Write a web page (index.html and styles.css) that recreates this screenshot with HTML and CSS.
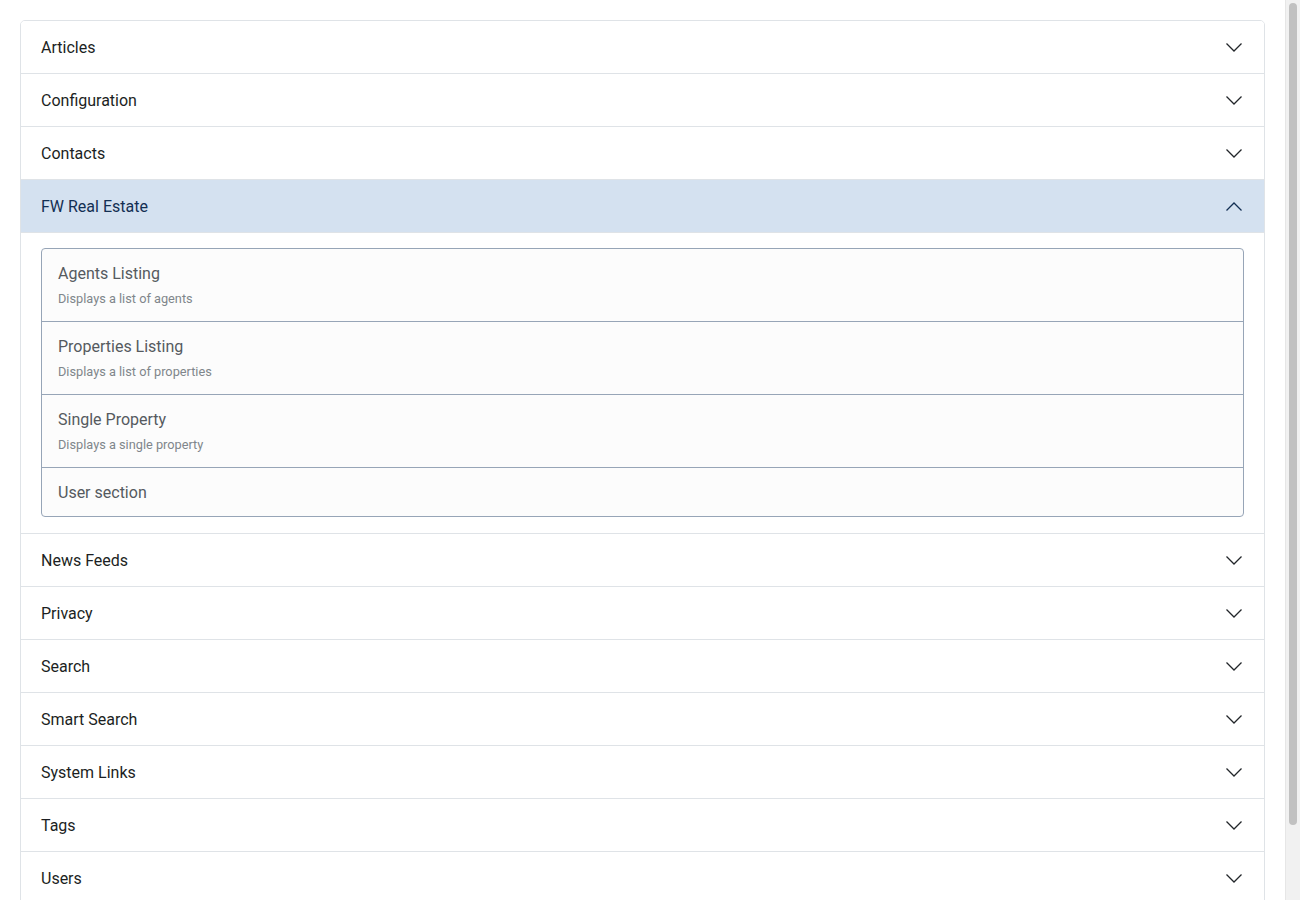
FILE: index.html
```html
<!DOCTYPE html>
<html lang="en">
<head>
<meta charset="utf-8">
<title>Menu Item Types</title>
<link rel="stylesheet" href="styles.css">
</head>
<body>
<div class="page">
  <div class="accordion">
    <div class="acc-item">
      <div class="acc-header"><span>Articles</span><svg class="chev" viewBox="0 0 16 9"><polyline points="0.5,0.5 8,8 15.5,0.5"/></svg></div>
    </div>
    <div class="acc-item">
      <div class="acc-header"><span>Configuration</span><svg class="chev" viewBox="0 0 16 9"><polyline points="0.5,0.5 8,8 15.5,0.5"/></svg></div>
    </div>
    <div class="acc-item">
      <div class="acc-header"><span>Contacts</span><svg class="chev" viewBox="0 0 16 9"><polyline points="0.5,0.5 8,8 15.5,0.5"/></svg></div>
    </div>
    <div class="acc-item open">
      <div class="acc-header active"><span>FW Real Estate</span><svg class="chev" viewBox="0 0 16 9"><polyline points="0.5,8.5 8,1 15.5,8.5"/></svg></div>
      <div class="acc-body">
        <div class="list">
          <div class="list-item">
            <div class="li-title">Agents Listing</div>
            <div class="li-desc">Displays a list of agents</div>
          </div>
          <div class="list-item">
            <div class="li-title">Properties Listing</div>
            <div class="li-desc">Displays a list of properties</div>
          </div>
          <div class="list-item">
            <div class="li-title">Single Property</div>
            <div class="li-desc">Displays a single property</div>
          </div>
          <div class="list-item">
            <div class="li-title">User section</div>
          </div>
        </div>
      </div>
    </div>
    <div class="acc-item">
      <div class="acc-header"><span>News Feeds</span><svg class="chev" viewBox="0 0 16 9"><polyline points="0.5,0.5 8,8 15.5,0.5"/></svg></div>
    </div>
    <div class="acc-item">
      <div class="acc-header"><span>Privacy</span><svg class="chev" viewBox="0 0 16 9"><polyline points="0.5,0.5 8,8 15.5,0.5"/></svg></div>
    </div>
    <div class="acc-item">
      <div class="acc-header"><span>Search</span><svg class="chev" viewBox="0 0 16 9"><polyline points="0.5,0.5 8,8 15.5,0.5"/></svg></div>
    </div>
    <div class="acc-item">
      <div class="acc-header"><span>Smart Search</span><svg class="chev" viewBox="0 0 16 9"><polyline points="0.5,0.5 8,8 15.5,0.5"/></svg></div>
    </div>
    <div class="acc-item">
      <div class="acc-header"><span>System Links</span><svg class="chev" viewBox="0 0 16 9"><polyline points="0.5,0.5 8,8 15.5,0.5"/></svg></div>
    </div>
    <div class="acc-item">
      <div class="acc-header"><span>Tags</span><svg class="chev" viewBox="0 0 16 9"><polyline points="0.5,0.5 8,8 15.5,0.5"/></svg></div>
    </div>
    <div class="acc-item">
      <div class="acc-header"><span>Users</span><svg class="chev" viewBox="0 0 16 9"><polyline points="0.5,0.5 8,8 15.5,0.5"/></svg></div>
    </div>
    <div class="acc-item">
      <div class="acc-header"><span>Wrapper</span><svg class="chev" viewBox="0 0 16 9"><polyline points="0.5,0.5 8,8 15.5,0.5"/></svg></div>
    </div>
  </div>
</div>
<div class="scrollbar" aria-hidden="true"><div class="scroll-thumb"></div></div>
</body>
</html>
```

FILE: styles.css
```css
html, body {
  margin: 0;
  padding: 0;
  background: #ffffff;
}
body {
  font-family: Roboto, "Liberation Sans", Arial, sans-serif;
  color: #22262a;
}
.page {
  padding: 20px 35px 20px 20px;
}
.scrollbar {
  position: fixed;
  top: 0;
  right: 0;
  bottom: 0;
  width: 14px;
  background: #f1f1f1;
  border-left: 1px solid #e6e6e6;
  display: flex;
  justify-content: center;
  padding-top: 3px;
  box-sizing: content-box;
}
.scroll-thumb {
  width: 8px;
  height: 822px;
  border-radius: 4px;
  background: #c1c1c1;
}
.accordion {
  border: 1px solid #dfe3e7;
  border-radius: 5px;
  overflow: hidden;
}
.acc-item + .acc-item {
  border-top: 1px solid #dfe3e7;
}
.acc-header {
  display: flex;
  align-items: center;
  justify-content: space-between;
  height: 52px;
  padding: 0 22px 0 20px;
  font-size: 16px;
  color: #1c1f23;
  background: #ffffff;
}
.acc-header.active {
  background: #d4e1f0;
  color: #132f53;
}
.chev {
  width: 16px;
  height: 9px;
  fill: none;
  stroke: #22262a;
  stroke-width: 1.25;
}
.acc-header.active .chev {
  stroke: #132f53;
}
.acc-body {
  padding: 15px 20px 16px;
  border-top: 1px solid #dfe3e7;
}
.list {
  border: 1px solid #97a5b7;
  border-radius: 4px;
  background: #fcfcfc;
}
.list-item {
  padding: 13px 16px 12px;
}
.list-item:last-child {
  padding-bottom: 11px;
}
.list-item + .list-item {
  border-top: 1px solid #97a5b7;
}
.li-title {
  font-size: 16px;
  line-height: 24px;
  color: #555a5f;
}
.li-desc {
  margin-top: 3px;
  font-size: 12.75px;
  line-height: 20px;
  color: #80868b;
}
```
